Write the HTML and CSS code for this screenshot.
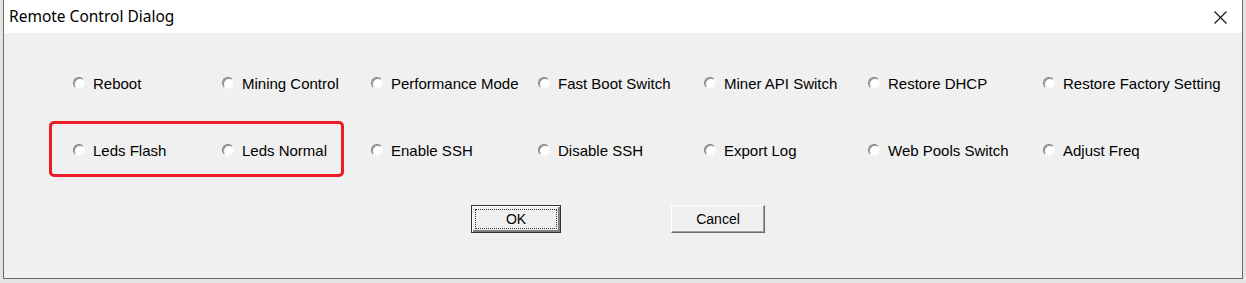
FILE: index.html
```html
<!DOCTYPE html>
<html lang="en">
<head>
    <meta charset="UTF-8">
    <title>Remote Control Dialog</title>
    <link rel="stylesheet" href="styles.css">
</head>
<body>
    <div class="window">
        <div class="titlebar">
            <span class="title">Remote Control Dialog</span>
            <span class="close">
                <svg width="13" height="13" viewBox="0 0 13 13"><path d="M0.5 0.5 L12.5 12.5 M12.5 0.5 L0.5 12.5" stroke="#111" stroke-width="1.1" fill="none"/></svg>
            </span>
        </div>
        <div class="content">
            <div class="options">
                <label class="opt"><span class="radio"></span>Reboot</label>
                <label class="opt"><span class="radio"></span>Mining Control</label>
                <label class="opt"><span class="radio"></span>Performance Mode</label>
                <label class="opt"><span class="radio"></span>Fast Boot Switch</label>
                <label class="opt"><span class="radio"></span>Miner API Switch</label>
                <label class="opt"><span class="radio"></span>Restore DHCP</label>
                <label class="opt"><span class="radio"></span>Restore Factory Setting</label>
                <label class="opt"><span class="radio"></span>Leds Flash</label>
                <label class="opt"><span class="radio"></span>Leds Normal</label>
                <label class="opt"><span class="radio"></span>Enable SSH</label>
                <label class="opt"><span class="radio"></span>Disable SSH</label>
                <label class="opt"><span class="radio"></span>Export Log</label>
                <label class="opt"><span class="radio"></span>Web Pools Switch</label>
                <label class="opt"><span class="radio"></span>Adjust Freq</label>
            </div>
            <div class="buttons">
                <button class="btn btn-default"><span class="focus">OK</span></button>
                <button class="btn">Cancel</button>
            </div>
            <div class="highlight"></div>
        </div>
    </div>
</body>
</html>
```

FILE: styles.css
```css
body { margin: 0; background: #e4e4e4; font-family: "Liberation Sans", Arial, sans-serif; }
.window { box-sizing: border-box; margin-left: 3px; width: 1240px; height: 279px; border: 1px solid #6a6a6a; border-top: none; display: flex; flex-direction: column; background: #f0f0f0; }
.titlebar { height: 33px; background: #fff; display: flex; align-items: center; justify-content: space-between; padding: 0 15px 0 5px; flex-shrink: 0; }
.title { font-family: "Noto Sans", sans-serif; font-size: 15.5px; color: #000; margin-top: -1px; }
.close { display: flex; margin-top: 1px; }
.content { position: relative; flex: 1; }
.options { display: grid; grid-template-columns: 149px 149px 167px 166px 164px 175px auto; row-gap: 47px; padding: 40px 0 0 69px; }
.opt { display: flex; align-items: center; height: 20px; font-size: 15px; color: #000; white-space: nowrap; }
.radio { box-sizing: border-box; width: 12px; height: 12px; border-radius: 50%; margin-right: 8px; background: #fff; border: 1px solid; border-color: #7a7a7a #f8f8f8 #f8f8f8 #7a7a7a; box-shadow: inset 1px 1px 0 #9a9a9a; }
.buttons { display: flex; gap: 110px; padding: 45px 0 0 467px; }
.btn { box-sizing: border-box; height: 28px; font-family: "Liberation Sans", Arial, sans-serif; font-size: 14px; color: #000; background: #f0f0f0; border: 1px solid; border-color: #fff #6a6a6a #6a6a6a #fff; box-shadow: inset -1px -1px 0 #a0a0a0; width: 94px; padding: 0; }
.btn-default { width: 90px; border: 1px solid #333; box-shadow: inset 1px 1px 0 #fff, inset -2px -2px 0 #808080; padding: 3px; }
.focus { display: flex; align-items: center; justify-content: center; height: 100%; border: 1px dotted #333; box-sizing: border-box; }
.highlight { position: absolute; left: 45px; top: 88px; width: 295px; height: 56px; box-sizing: border-box; border: 3px solid #ec1c24; border-radius: 5px; }
```
